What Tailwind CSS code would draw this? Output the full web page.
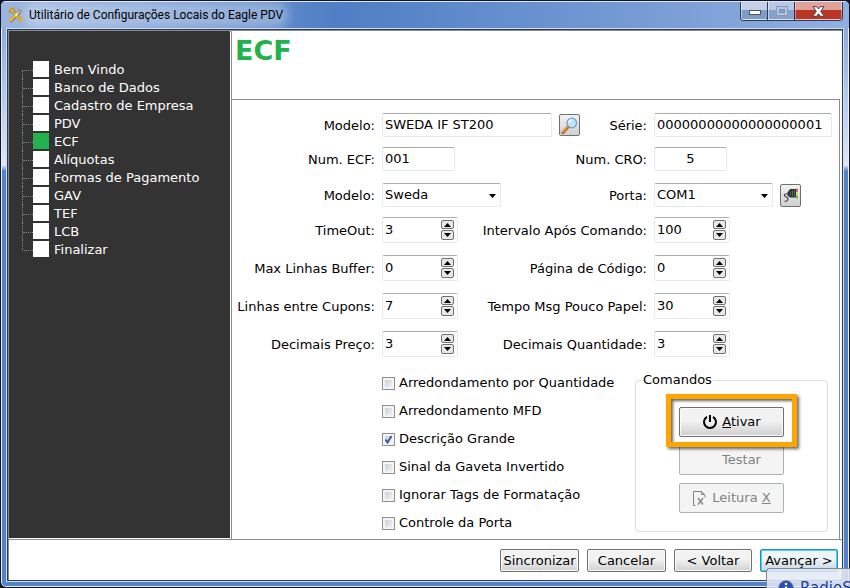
<!DOCTYPE html>
<html lang="pt-BR">
<head>
<meta charset="utf-8">
<title>Utilitário de Configurações Locais do Eagle PDV</title>
<script src="https://cdn.jsdelivr.net/npm/@tailwindcss/browser@4"></script>
</head>
<body class="h-screen overflow-hidden bg-[#14172a] font-['DejaVu_Sans',Verdana,sans-serif] text-[13px] leading-4 text-black">

<!-- Window frame -->
<div class="relative flex h-screen flex-col overflow-hidden rounded-md border border-[#12152a] bg-linear-to-b from-[#8eacdb] from-5% via-[#dfe7f5] via-28% to-[#5482c6] to-29% ring-1 ring-[#e6eefa] ring-inset">

  <!-- Title bar -->
  <header class="flex h-[27px] shrink-0 items-start justify-between border-t border-[#dbe7f8] bg-linear-to-r from-[#9db6e0] via-[#4f7ec4] via-40% to-[#92b0df] pl-[7px]">
    <div class="flex items-center gap-[5px] pt-[5px]">
      <svg class="size-4" viewBox="0 0 16 16" fill="none" stroke-linecap="round">
        <path d="M3 13.500 12 4.500" stroke="#5c5a4a" stroke-width="3.400"/>
        <path d="M4 3.500 13 13" stroke="#6d5a20" stroke-width="3"/>
        <path d="M1.800 4.500 5 1.800" stroke="#c99a1c" stroke-width="3"/>
        <path d="M4 3.500 9 9" stroke="#f3d45a" stroke-width="1.600"/>
        <path d="M9 9 13.500 13.500" stroke="#e0ab25" stroke-width="3"/>
        <path d="M2.500 13.500 7 9" stroke="#e9b929" stroke-width="2.800"/>
        <path d="M8 8 11.500 4.500" stroke="#ece9d8" stroke-width="1.800"/>
        <path d="M11 2v3h3.500" stroke="#a9a68f" stroke-width="2.200"/>
      </svg>
      <h1 class="rounded-full bg-white/30 font-[Roboto,'Open_Sans',sans-serif] text-[12px] leading-4 whitespace-nowrap shadow-[0_0_10px_6px_rgba(255,255,255,0.300)]">Utilitário de Configurações Locais do Eagle PDV</h1>
    </div>
    <div class="mr-[6px] flex h-[19px] w-[103px] shrink-0 overflow-hidden rounded-b border border-t-0 border-[#2c3b5c]">
      <button type="button" aria-label="Minimizar" class="flex flex-1 items-center justify-center border border-t-0 border-white/50 bg-linear-to-b from-[#c3d0e8] from-45% to-[#7f9bc9] to-50% pt-1">
        <svg class="h-[5px] w-3" viewBox="0 0 12 5"><rect x=".5" y=".5" width="11" height="4" fill="#fff" stroke="#4d5468"/></svg>
      </button>
      <button type="button" aria-label="Maximizar" disabled class="flex flex-1 items-center justify-center border border-t-0 border-white/50 bg-linear-to-b from-[#b9c9e5] from-45% to-[#86a1cf] to-50% pt-px shadow-[-1px_0_0_#2c3b5c]">
        <svg class="h-[10px] w-3" viewBox="0 0 12 10" fill="none"><rect x="2" y="2" width="8" height="6" stroke="#b4c4de" stroke-width="3"/><rect x=".5" y=".5" width="11" height="9" stroke="#8799b8"/><rect x="3.500" y="3.500" width="5" height="3" stroke="#7e90b0"/></svg>
      </button>
      <button type="button" aria-label="Fechar" class="flex w-[47px] items-center justify-center border border-t-0 border-white/40 bg-linear-to-b from-[#dfa298] from-45% to-[#b93526] to-50% pt-px shadow-[-1px_0_0_#3c2b3c]">
        <svg class="h-[11px] w-[13px]" viewBox="0 0 13 11"><path d="M1 .7h3.700L6.500 3 8.300.7H12L8.700 5.300 12.300 10.300H8.400L6.500 7.800 4.600 10.300H.7L4.300 5.300Z" fill="#fff" stroke="#4d3e4c"/></svg>
      </button>
    </div>
  </header>

  <!-- Client area -->
  <div class="mx-[5px] mb-[5px] flex min-h-0 flex-1 flex-col border border-[#cfe0f4]">
    <div class="flex min-h-0 flex-1 flex-col border border-[#2b3a5c] bg-white">
      <div class="flex min-h-0 flex-1 border-t border-l border-[#8c8c8c]">

        <nav aria-label="Etapas" class="mb-px w-[221px] shrink-0 bg-[#333333] pt-[29px] pl-[13px] text-white">
          <ul>
            <li class="flex h-[18px] items-center"><span class="h-2 w-[11px] shrink-0 self-end border-t border-l border-dotted border-[#8a8a8a]"></span><a href="#" class="flex h-4 gap-[5px] leading-[18px]"><span class="size-4 bg-white"></span>Bem Vindo</a></li>
            <li class="flex h-[18px] items-center"><span class="h-[18px] w-[11px] shrink-0 border-l border-dotted border-[#8a8a8a] pt-[10px]"><span class="block border-t border-dotted border-[#8a8a8a]"></span></span><a href="#" class="flex h-4 gap-[5px] leading-[18px]"><span class="size-4 bg-white"></span>Banco de Dados</a></li>
            <li class="flex h-[18px] items-center"><span class="h-[18px] w-[11px] shrink-0 border-l border-dotted border-[#8a8a8a] pt-[10px]"><span class="block border-t border-dotted border-[#8a8a8a]"></span></span><a href="#" class="flex h-4 gap-[5px] leading-[18px]"><span class="size-4 bg-white"></span>Cadastro de Empresa</a></li>
            <li class="flex h-[18px] items-center"><span class="h-[18px] w-[11px] shrink-0 border-l border-dotted border-[#8a8a8a] pt-[10px]"><span class="block border-t border-dotted border-[#8a8a8a]"></span></span><a href="#" class="flex h-4 gap-[5px] leading-[18px]"><span class="size-4 bg-white"></span>PDV</a></li>
            <li class="flex h-[18px] items-center"><span class="h-[18px] w-[11px] shrink-0 border-l border-dotted border-[#8a8a8a] pt-[10px]"><span class="block border-t border-dotted border-[#8a8a8a]"></span></span><a href="#" aria-current="step" class="flex h-4 gap-[5px] leading-[18px]"><span class="size-4 bg-[#22b14c]"></span>ECF</a></li>
            <li class="flex h-[18px] items-center"><span class="h-[18px] w-[11px] shrink-0 border-l border-dotted border-[#8a8a8a] pt-[10px]"><span class="block border-t border-dotted border-[#8a8a8a]"></span></span><a href="#" class="flex h-4 gap-[5px] leading-[18px]"><span class="size-4 bg-white"></span>Alíquotas</a></li>
            <li class="flex h-[18px] items-center"><span class="h-[18px] w-[11px] shrink-0 border-l border-dotted border-[#8a8a8a] pt-[10px]"><span class="block border-t border-dotted border-[#8a8a8a]"></span></span><a href="#" class="flex h-4 gap-[5px] leading-[18px]"><span class="size-4 bg-white"></span>Formas de Pagamento</a></li>
            <li class="flex h-[18px] items-center"><span class="h-[18px] w-[11px] shrink-0 border-l border-dotted border-[#8a8a8a] pt-[10px]"><span class="block border-t border-dotted border-[#8a8a8a]"></span></span><a href="#" class="flex h-4 gap-[5px] leading-[18px]"><span class="size-4 bg-white"></span>GAV</a></li>
            <li class="flex h-[18px] items-center"><span class="h-[18px] w-[11px] shrink-0 border-l border-dotted border-[#8a8a8a] pt-[10px]"><span class="block border-t border-dotted border-[#8a8a8a]"></span></span><a href="#" class="flex h-4 gap-[5px] leading-[18px]"><span class="size-4 bg-white"></span>TEF</a></li>
            <li class="flex h-[18px] items-center"><span class="h-[18px] w-[11px] shrink-0 border-l border-dotted border-[#8a8a8a] pt-[10px]"><span class="block border-t border-dotted border-[#8a8a8a]"></span></span><a href="#" class="flex h-4 gap-[5px] leading-[18px]"><span class="size-4 bg-white"></span>LCB</a></li>
            <li class="flex h-[18px] items-center"><span class="h-[11px] w-[11px] shrink-0 self-start border-b border-l border-dotted border-[#8a8a8a]"></span><a href="#" class="flex h-4 gap-[5px] leading-[18px]"><span class="size-4 bg-white"></span>Finalizar</a></li>
          </ul>
        </nav>

        <main class="mr-[2px] ml-px flex min-w-0 flex-1 flex-col border-l border-[#8c8c8c]">
          <h2 class="h-[68px] shrink-0 pt-1 pl-[3px] text-[27px] leading-8 font-bold text-[#22b14c]">ECF</h2>

          <form class="min-h-0 flex-1 border-t border-r border-[#8c8c8c] pt-[13px] pr-[7px]">
            <!-- Row 1 -->
            <div class="grid grid-cols-[143px_minmax(0,1fr)_178px] items-center gap-[7px]">
              <label for="modelo" class="pt-[2px] text-right whitespace-nowrap">Modelo:</label>
              <div class="flex items-center justify-between">
                <div class="flex items-center gap-[7px]">
                  <input id="modelo" value="SWEDA IF ST200" class="h-6 w-[170px] rounded-xs border border-[#e3e9ef] border-t-[#abadb3] px-[2px] pb-px">
                  <button type="button" aria-label="Pesquisar modelo" class="flex h-[22px] w-[21px] items-center justify-center rounded-xs border border-[#707070] bg-linear-to-b from-[#f2f2f2] to-[#cfcfcf]">
                    <svg class="size-[17px]" viewBox="0 0 17 17"><path d="M2 15.500 7.500 9.500" stroke="#b8611c" stroke-width="3.200" stroke-linecap="round"/><path d="M2 14.800 6.500 10" stroke="#f09a3e" stroke-width="1.500" stroke-linecap="round"/><circle cx="10.800" cy="6" r="4.800" fill="#bfe3fb" stroke="#6d9fd0" stroke-width="1.300"/><path d="M8 6a3 3 0 0 1 3-3" fill="none" stroke="#fff" stroke-width="1.500"/></svg>
                  </button>
                </div>
                <label for="serie" class="pt-[2px] whitespace-nowrap">Série:</label>
              </div>
              <input id="serie" value="00000000000000000001" class="h-6 w-full rounded-xs border border-[#e3e9ef] border-t-[#abadb3] px-[2px] pb-px">
            </div>
            <!-- Row 2 -->
            <div class="mt-[10px] grid grid-cols-[143px_minmax(0,1fr)_178px] items-center gap-[7px]">
              <label for="numecf" class="pt-[2px] text-right whitespace-nowrap">Num. ECF:</label>
              <div class="flex items-center justify-between">
                <input id="numecf" value="001" class="h-6 w-[73px] rounded-xs border border-[#e3e9ef] border-t-[#abadb3] px-[2px] pb-px">
                <label for="numcro" class="pt-[2px] whitespace-nowrap">Num. CRO:</label>
              </div>
              <input id="numcro" value="5" class="h-6 w-[73px] rounded-xs border border-[#e3e9ef] border-t-[#abadb3] px-[2px] pb-px text-center">
            </div>
            <!-- Row 3 -->
            <div class="mt-3 grid grid-cols-[143px_minmax(0,1fr)_178px] items-center gap-[7px]">
              <label for="marca" class="pt-[2px] text-right whitespace-nowrap">Modelo:</label>
              <div class="flex items-center justify-between">
                <div class="relative">
                  <select id="marca" class="block h-6 w-[119px] appearance-none rounded-xs border border-[#e3e9ef] border-t-[#abadb3] bg-white px-[2px] pb-px"><option>Sweda</option></select>
                  <svg class="pointer-events-none absolute top-[11px] right-[5px] h-1 w-[7px]" viewBox="0 0 7 4"><path d="M0 0h7L3.500 4Z"/></svg>
                </div>
                <label for="porta" class="pt-[2px] whitespace-nowrap">Porta:</label>
              </div>
              <div class="flex items-center gap-[7px]">
                <div class="relative">
                  <select id="porta" class="block h-6 w-[119px] appearance-none rounded-xs border border-[#e3e9ef] border-t-[#abadb3] bg-white px-[2px] pb-px"><option>COM1</option></select>
                  <svg class="pointer-events-none absolute top-[11px] right-[5px] h-1 w-[7px]" viewBox="0 0 7 4"><path d="M0 0h7L3.500 4Z"/></svg>
                </div>
                <button type="button" aria-label="Configurar porta" class="flex h-[23px] w-[21px] items-center justify-center rounded-xs border border-[#707070] bg-linear-to-b from-[#f2f2f2] to-[#cfcfcf]">
                  <svg class="h-[15px] w-4 shrink-0" viewBox="0 0 16 15"><path d="M4.500 4.500 7 1h6v8.500H7L4.500 7.500Z" fill="#26332f"/><path d="M7.500 3v5M9.500 2.500v6M11.500 2v7" stroke="#4f7a70" stroke-width=".8"/><path d="M14 .5v3.500" stroke="#e33" stroke-width="1.400"/><path d="M14 4v3.500" stroke="#dcd620" stroke-width="1.400"/><path d="M14 7.500v3" stroke="#25b34b" stroke-width="1.400"/><path d="M5 6H2.500C1 6 1 8 2.500 8.500L4 9.500c2 1.500 1 4-2.500 4" fill="none" stroke="#444" stroke-width="1.200"/></svg>
                </button>
              </div>
            </div>
            <div id="spinners"></div>

            <div class="flex items-start justify-between pt-[15px] pr-[4px] pl-[150px]">
              <div class="flex flex-col gap-3 pt-[3px]">
                <label class="flex h-4 items-center gap-1 whitespace-nowrap"><input type="checkbox" class="size-[13px] appearance-none border border-[#8e8f8f] bg-linear-to-br from-[#c4c8ce] to-[#fafafa] shadow-[inset_0_0_0_2px_#f4f4f4]">Arredondamento por Quantidade</label>
                <label class="flex h-4 items-center gap-1 whitespace-nowrap"><input type="checkbox" class="size-[13px] appearance-none border border-[#8e8f8f] bg-linear-to-br from-[#c4c8ce] to-[#fafafa] shadow-[inset_0_0_0_2px_#f4f4f4]">Arredondamento MFD</label>
                <label class="relative flex h-4 items-center gap-1 whitespace-nowrap"><input type="checkbox" checked class="size-[13px] appearance-none border border-[#8e8f8f] bg-linear-to-br from-[#c4c8ce] to-[#fafafa] shadow-[inset_0_0_0_2px_#f4f4f4]">Descrição Grande<svg class="pointer-events-none absolute top-[2px] left-0 size-[13px]" viewBox="0 0 13 13"><path d="M3.500 6.500 5.500 9.500 9.500 3" fill="none" stroke="#3f5397" stroke-width="1.900"/></svg></label>
                <label class="flex h-4 items-center gap-1 whitespace-nowrap"><input type="checkbox" class="size-[13px] appearance-none border border-[#8e8f8f] bg-linear-to-br from-[#c4c8ce] to-[#fafafa] shadow-[inset_0_0_0_2px_#f4f4f4]">Sinal da Gaveta Invertido</label>
                <label class="flex h-4 items-center gap-1 whitespace-nowrap"><input type="checkbox" class="size-[13px] appearance-none border border-[#8e8f8f] bg-linear-to-br from-[#c4c8ce] to-[#fafafa] shadow-[inset_0_0_0_2px_#f4f4f4]">Ignorar Tags de Formatação</label>
                <label class="flex h-4 items-center gap-1 whitespace-nowrap"><input type="checkbox" class="size-[13px] appearance-none border border-[#8e8f8f] bg-linear-to-br from-[#c4c8ce] to-[#fafafa] shadow-[inset_0_0_0_2px_#f4f4f4]">Controle da Porta</label>
              </div>

              <fieldset class="w-[193px] rounded border border-[#d5dfe5] px-[6px] pb-[18px]">
                <legend class="px-px">Comandos</legend>
                <div class="mx-auto flex w-[105px] flex-col gap-2 pt-[19px]">
                  <div class="relative z-10">
                    <div class="pointer-events-none absolute -inset-x-[13px] -top-[13px] -bottom-[10px] border-[5px] border-[#ffa500] bg-white shadow-[2px_2px_3px_rgba(0,0,0,0.600),inset_2px_2px_3px_rgba(0,0,0,0.600)]"></div>
                    <button type="button" class="relative flex h-[30px] w-full items-center justify-center gap-1 rounded-xs border border-[#707070] bg-linear-to-b from-[#f2f2f2] from-45% to-[#cfcfcf] to-100% shadow-[inset_0_0_0_1px_#fafafa]">
                      <svg class="size-4" viewBox="0 0 16 16" fill="none" stroke="#000" stroke-width="2"><path d="M5 2.800a6 6 0 1 0 6 0M8 1v7"/></svg>
                      <span><u>A</u>tivar</span>
                    </button>
                  </div>
                  <button type="button" disabled class="flex h-[30px] items-center justify-center gap-1 rounded-xs border border-[#adb2b5] bg-[#f4f4f4] pl-5 text-[#838383]">Testar</button>
                  <button type="button" disabled class="flex h-[30px] items-center justify-center gap-1 rounded-xs border border-[#adb2b5] bg-[#f4f4f4] text-[#838383]">
                    <svg class="size-4" viewBox="0 0 16 16" fill="none" stroke="#838383"><path d="M3.500 15.500h-2V1.500H9.500L13 5v2.500M9.500 1.500V4.500H13"/><path d="m6 8 5 6.500M11 8l-5 6.500" stroke-width="1.300"/></svg>
                    <span>Leitura <u>X</u></span>
                  </button>
                </div>
              </fieldset>
            </div>
          </form>
        </main>
      </div>

      <!-- Wizard buttons -->
      <footer class="flex h-[41px] shrink-0 items-start justify-end gap-2 border-t border-l border-[#8c8c8c] pt-[9px] pr-1">
        <button type="button" class="h-[23px] w-[79px] rounded-xs border border-[#707070] bg-linear-to-b from-[#f2f2f2] from-45% to-[#cfcfcf] whitespace-nowrap shadow-[inset_0_0_0_1px_#fafafa]">Sincronizar</button>
        <button type="button" class="h-[23px] w-[79px] rounded-xs border border-[#707070] bg-linear-to-b from-[#f2f2f2] from-45% to-[#cfcfcf] whitespace-nowrap shadow-[inset_0_0_0_1px_#fafafa]">Cancelar</button>
        <button type="button" class="h-[23px] w-[78px] rounded-xs border border-[#707070] bg-linear-to-b from-[#f2f2f2] from-45% to-[#cfcfcf] whitespace-nowrap shadow-[inset_0_0_0_1px_#fafafa]">&lt; Voltar</button>
        <button type="button" class="h-[23px] w-[78px] rounded-xs border border-[#2c8fb8] bg-linear-to-b from-[#eef4f7] from-45% to-[#c8d6de] whitespace-nowrap shadow-[inset_0_0_0_1px_#48d1f5]">Avançar &gt;</button>
      </footer>
    </div>
  </div>
</div>

<!-- Notification sliding in from the corner -->
<div class="absolute right-0 bottom-0 h-5 w-[84px] overflow-hidden rounded-tl border-t border-l border-[#7f8894] bg-[#e4e9f4]/85">
  <div class="flex items-center gap-[6px] pt-[11px] pl-[11px]">
    <svg class="size-4 shrink-0" viewBox="0 0 16 16"><circle cx="8" cy="8" r="7.500" fill="#2c50b4" stroke="#8b93a8"/><path d="M8 3v2M8 6.500V12" stroke="#fff" stroke-width="2.200"/></svg>
    <span class="text-[15px] whitespace-nowrap text-[#1a3f9c]">RadioS</span>
  </div>
</div>

<script>
const rows = [
  ["TimeOut", 3, "Intervalo Após Comando", 100],
  ["Max Linhas Buffer", 0, "Página de Código", 0],
  ["Linhas entre Cupons", 7, "Tempo Msg Pouco Papel", 30],
  ["Decimais Preço", 3, "Decimais Quantidade", 3],
];
const spin = (id, v) => `
  <div class="flex h-[26px] w-[76px] items-start rounded-xs border border-[#e3e9ef] border-t-[#abadb3] pr-[3px]">
    <input id="${id}" value="${v}" class="h-[22px] w-0 flex-1 px-[2px]">
    <div class="flex flex-col gap-px pt-[2px]">
      <button type="button" aria-label="Aumentar" class="flex h-[9px] w-[13px] items-center justify-center rounded-xs border border-[#707070] bg-[#e8e8e8]"><svg class="h-1 w-[7px]" viewBox="0 0 7 4"><path d="M0 4h7L3.500 0Z"/></svg></button>
      <button type="button" aria-label="Diminuir" class="flex h-[10px] w-[13px] items-center justify-center rounded-xs border border-[#707070] bg-[#e8e8e8]"><svg class="h-1 w-[7px]" viewBox="0 0 7 4"><path d="M0 0h7L3.500 4Z"/></svg></button>
    </div>
  </div>`;
document.getElementById("spinners").innerHTML = rows.map(([a, x, b, y], i) => `
  <div class="${i ? "mt-3" : "mt-[10px]"} grid grid-cols-[143px_minmax(0,1fr)_178px] items-center gap-[7px]">
    <label for="l${i}" class="pt-[2px] text-right whitespace-nowrap">${a}:</label>
    <div class="flex items-center justify-between">${spin("l" + i, x)}<label for="r${i}" class="pt-[2px] whitespace-nowrap">${b}:</label></div>
    ${spin("r" + i, y)}
  </div>`).join("");
</script>
</body>
</html>
